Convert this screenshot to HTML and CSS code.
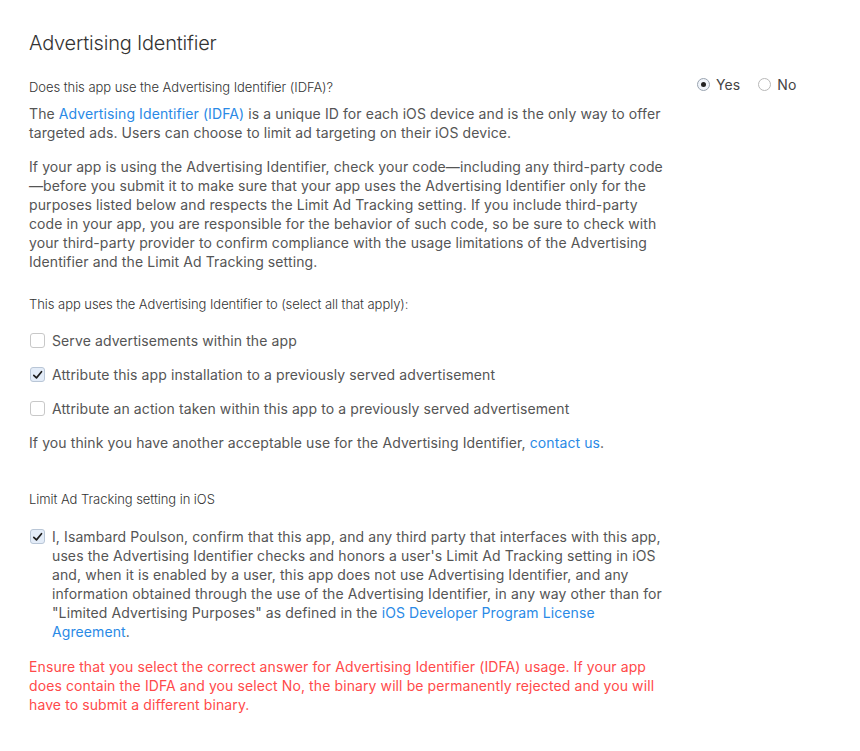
FILE: index.html
```html
<!DOCTYPE html>
<html lang="en">
<head>
<meta charset="utf-8">
<title>Advertising Identifier</title>
<link rel="stylesheet" href="styles.css">
</head>
<body>
<main class="section">
  <h2 class="title">Advertising Identifier</h2>
  <div class="row">
    <div class="main-col">
      <p class="question">Does this app use the Advertising Identifier (IDFA)?</p>
      <p class="para first">The <a href="#">Advertising Identifier (IDFA)</a> is a unique ID for each iOS device and is the only way to offer<br>targeted ads. Users can choose to limit ad targeting on their iOS device.</p>
      <p class="para">If your app is using the Advertising Identifier, check your code—including any third-party code<br>—before you submit it to make sure that your app uses the Advertising Identifier only for the<br>purposes listed below and respects the Limit Ad Tracking setting. If you include third-party<br>code in your app, you are responsible for the behavior of such code, so be sure to check with<br>your third-party provider to confirm compliance with the usage limitations of the Advertising<br>Identifier and the Limit Ad Tracking setting.</p>
      <p class="question q2">This app uses the Advertising Identifier to (select all that apply):</p>
      <ul class="checks">
        <li class="check-row"><span class="box"></span><span class="para">Serve advertisements within the app</span></li>
        <li class="check-row"><span class="box checked"><svg viewBox="0 0 14 14" width="14" height="14"><path d="M3 7.3 L5.9 10.1 L11.3 3.5" fill="none" stroke="#1c1c1c" stroke-width="1.8" stroke-linecap="round" stroke-linejoin="round"/></svg></span><span class="para">Attribute this app installation to a previously served advertisement</span></li>
        <li class="check-row"><span class="box"></span><span class="para">Attribute an action taken within this app to a previously served advertisement</span></li>
      </ul>
      <p class="para contact">If you think you have another acceptable use for the Advertising Identifier, <a href="#">contact us</a>.</p>
      <p class="question q3">Limit Ad Tracking setting in iOS</p>
      <div class="check-row confirm"><span class="box checked"><svg viewBox="0 0 14 14" width="14" height="14"><path d="M3 7.3 L5.9 10.1 L11.3 3.5" fill="none" stroke="#1c1c1c" stroke-width="1.8" stroke-linecap="round" stroke-linejoin="round"/></svg></span><p class="para">I, Isambard Poulson, confirm that this app, and any third party that interfaces with this app,<br>uses the Advertising Identifier checks and honors a user's Limit Ad Tracking setting in iOS<br>and, when it is enabled by a user, this app does not use Advertising Identifier, and any<br>information obtained through the use of the Advertising Identifier, in any way other than for<br>"Limited Advertising Purposes" as defined in the <a href="#">iOS Developer Program License<br>Agreement</a>.</p></div>
      <p class="para warning">Ensure that you select the correct answer for Advertising Identifier (IDFA) usage. If your app<br>does contain the IDFA and you select No, the binary will be permanently rejected and you will<br>have to submit a different binary.</p>
    </div>
    <div class="radios">
      <label class="radio"><span class="dot on"></span>Yes</label>
      <label class="radio"><span class="dot"></span>No</label>
    </div>
  </div>
</main>
</body>
</html>
```

FILE: styles.css
```css
* { box-sizing: border-box; }
html, body { margin: 0; padding: 0; background: #fff; }
body { font-family: Inter, "Liberation Sans", sans-serif; color: #555; }
.section { padding: 30px 0 0 29px; width: 860px; }
.title { margin: 0; font-size: 20px; line-height: 26px; font-weight: 300; color: #333; letter-spacing: -0.2px; }
.row { display: flex; margin-top: 22px; }
.main-col { width: 650px; }
p { margin: 0; }
.question { font-size: 13px; line-height: 19px; font-weight: 300; color: #333; letter-spacing: -0.05px; }
.para { font-size: 14px; line-height: 19px; color: #555; white-space: nowrap; letter-spacing: 0.1px; }
.para.first { margin-top: 7px; }
.para + .para { margin-top: 15px; }
a { color: #2a8ae6; text-decoration: none; }
.q2 { margin-top: 24px; }
.checks { list-style: none; margin: 17px 0 0; padding: 0; display: flex; flex-direction: column; gap: 15px; }
.check-row { display: flex; align-items: flex-start; gap: 7px; }
.box { width: 15px; height: 15px; margin-top: 2px; margin-left: 1px; border: 1px solid #c8c8c8; border-radius: 3px; background: #fff; display: flex; align-items: center; justify-content: center; flex: none; }
.box.checked { background: #e3ecf8; border-color: #b9c6d6; }
.box svg { display: block; }
.para.contact { margin-top: 15px; }
.q3 { margin-top: 38px; }
.confirm { margin-top: 18px; }
.warning { margin-top: 16px; color: #ff4a4a; }
.radios { display: flex; gap: 18px; margin-left: 18px; margin-top: -3px; }
.radio { display: flex; align-items: center; gap: 6px; font-size: 14px; line-height: 19px; color: #444; height: 19px; letter-spacing: 0.1px; }
.dot { width: 13px; height: 13px; border: 1px solid #b8b8b8; border-radius: 50%; display: flex; align-items: center; justify-content: center; background: #fff; }
.dot.on { background: #f0f4fa; border-color: #9aa4b0; }
.dot.on::after { content: ""; width: 5px; height: 5px; border-radius: 50%; background: #222; }
```
